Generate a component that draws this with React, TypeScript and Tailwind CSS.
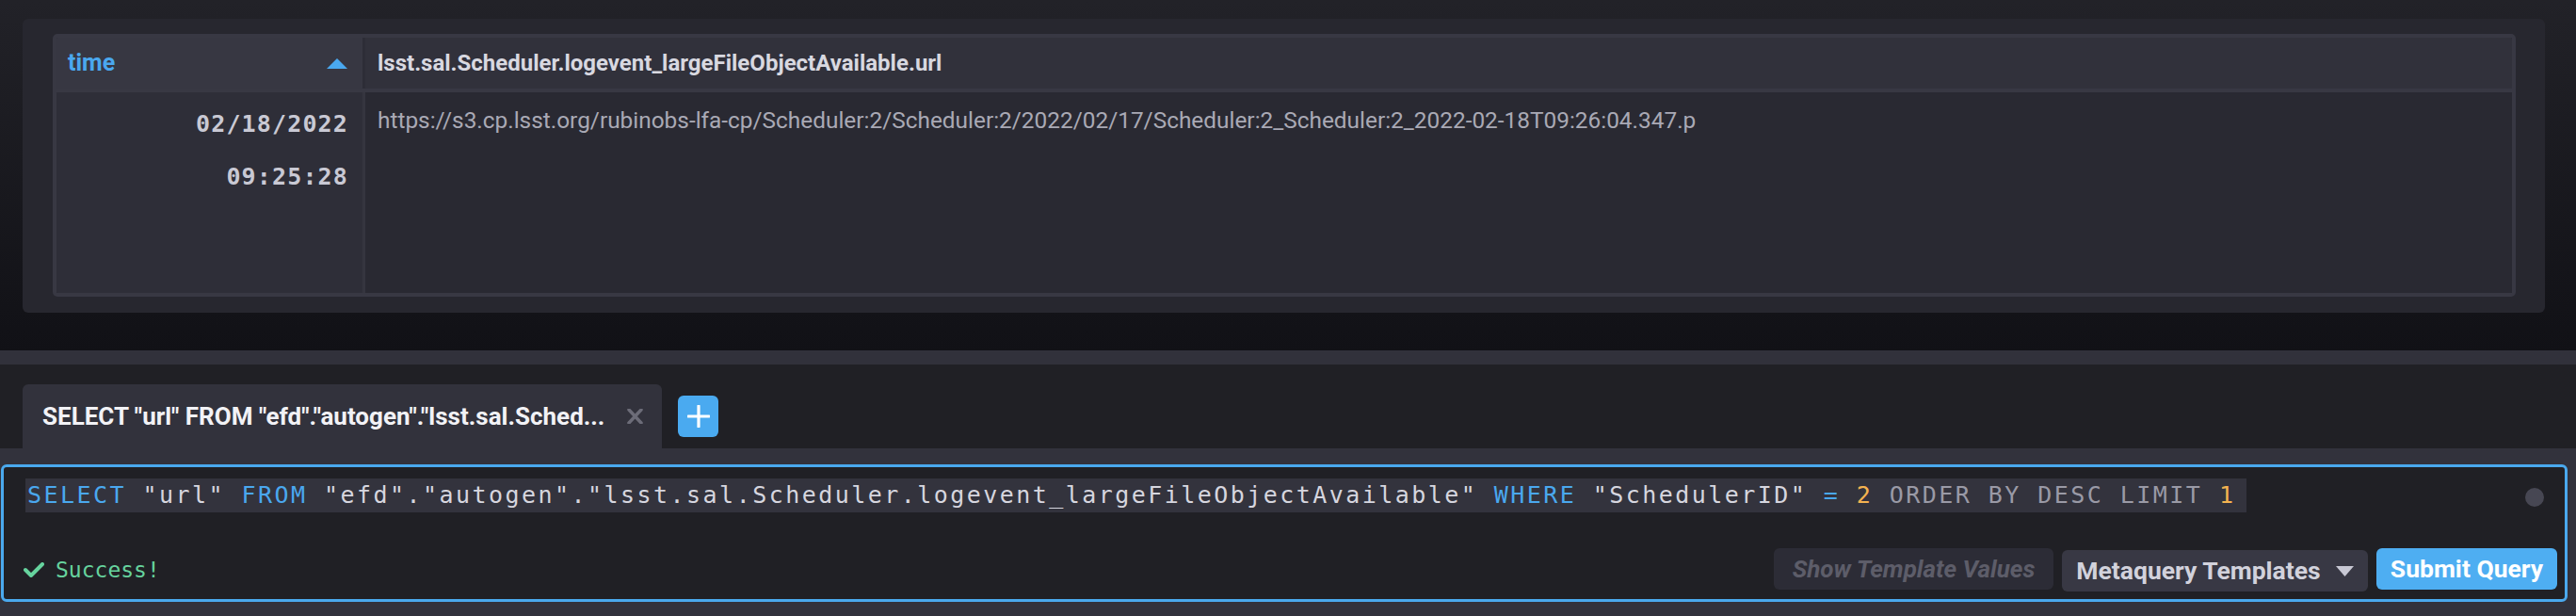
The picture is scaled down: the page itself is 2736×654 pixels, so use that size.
import { ReactNode } from "react";

const mono = "font-['DejaVu_Sans_Mono',monospace]";

function Kw({ children }: { children: ReactNode }) {
  return <span className="text-[#4aa8ef]">{children}</span>;
}

function Str({ children }: { children: ReactNode }) {
  return <span className="text-[#d6d6df]">{children}</span>;
}

function Num({ children }: { children: ReactNode }) {
  return <span className="text-[#f4b350]">{children}</span>;
}

function ResultsTable() {
  return (
    <div className="h-full rounded-[5px] border-4 border-[#383843] flex flex-col overflow-hidden">
      {/* Header */}
      <div className="h-[58px] flex border-b-4 border-[#383843]">
        <div className="w-[328px] shrink-0 bg-[#373742] border-r-[3px] border-[#2d2d37] flex items-center justify-between pl-3 pr-4">
          <span className="text-[25px] font-bold text-[#4aa8ef]">time</span>
          <svg width="22" height="11" viewBox="0 0 22 11">
            <polygon points="11,0 22,11 0,11" fill="#4aa8ef" />
          </svg>
        </div>
        <div className="flex-1 bg-[#31313b] flex items-center pl-[13px]">
          <span className="text-[24px] font-bold text-[#d8d8e0]">
            lsst.sal.Scheduler.logevent_largeFileObjectAvailable.url
          </span>
        </div>
      </div>
      {/* Body */}
      <div className="flex-1 flex">
        <div className="w-[328px] shrink-0 bg-[#2e2e38] border-r-[3px] border-[#35353f] pt-[6px] pr-[15px] text-right">
          <div className={`${mono} text-[25px] font-bold tracking-[1.15px] leading-[56px] text-[#c9c9d4]`}>
            02/18/2022
            <br />
            09:25:28
          </div>
        </div>
        <div className="flex-1 bg-[#292932] pl-[13px] pt-[2px]">
          <div className="text-[24.4px] leading-[56px] text-[#a9a9b5] whitespace-nowrap">
            https://s3.cp.lsst.org/rubinobs-lfa-cp/Scheduler:2/Scheduler:2/2022/02/17/Scheduler:2_Scheduler:2_2022-02-18T09:26:04.347.p
          </div>
        </div>
      </div>
    </div>
  );
}

function QueryEditor() {
  return (
    <div className="relative h-full flex flex-col rounded-md border-[3px] border-[#4aa9ee] bg-[#202025]">
      <div className="pt-3 pl-[23px]">
        <span
          className={`${mono} inline-block bg-[#33333d] pl-[2px] pr-3 text-[25px] tracking-[2.45px] leading-[36px] whitespace-pre`}
        >
          <Kw>SELECT</Kw> <Str>"url"</Str> <Kw>FROM</Kw>{" "}
          <Str>"efd"."autogen"."lsst.sal.Scheduler.logevent_largeFileObjectAvailable"</Str>{" "}
          <Kw>WHERE</Kw> <Str>"SchedulerID"</Str> <Kw>=</Kw> <Num>2</Num>{" "}
          <span className="text-[#9a9aa6]">ORDER BY DESC LIMIT</span> <Num>1</Num>
        </span>
      </div>
      <div className="absolute right-[22px] top-[22px] w-5 h-5 rounded-full bg-[#474753]" />

      <div className="mt-auto flex items-center justify-between pl-[21px] pr-2 pb-2">
        <div className="flex items-center gap-3 text-[#66d39e]">
          <svg width="22" height="16" viewBox="0 0 22 16" fill="none">
            <polyline points="2,8 8,14 20,2" stroke="#66d39e" strokeWidth="4" strokeLinecap="round" strokeLinejoin="round" />
          </svg>
          <span className={`${mono} text-[23px]`}>Success!</span>
        </div>
        <div className="flex items-start gap-[9px]">
          <button className="w-[297px] h-11 rounded-md bg-[#2c2c36] text-[26px] font-bold italic text-[#5d5d69] whitespace-nowrap">
            Show Template Values
          </button>
          <button className="mt-[2px] w-[325px] h-11 rounded-md bg-[#383844] flex items-center justify-center gap-4 text-[26.5px] font-bold text-[#d2d2dc] whitespace-nowrap">
            Metaquery Templates
            <svg width="19" height="11" viewBox="0 0 19 11">
              <polygon points="0,0 19,0 9.5,11" fill="#c8c8d4" />
            </svg>
          </button>
          <button className="w-[192px] h-11 rounded-md bg-[#4eaef2] text-[26.5px] font-bold text-white whitespace-nowrap">
            Submit Query
          </button>
        </div>
      </div>
    </div>
  );
}

export default function App() {
  return (
    <div className="w-[2736px] h-[654px] flex flex-col overflow-hidden font-['Roboto',sans-serif]">
      {/* Results area */}
      <section className="h-[372px] shrink-0 bg-gradient-to-b from-[#222228] to-[#111116] pt-5 pl-6 pr-[33px]">
        <div className="h-[312px] rounded-md bg-[#27272f] pt-4 pb-[17px] pl-8 pr-[31px]">
          <ResultsTable />
        </div>
      </section>

      {/* Drag divider */}
      <div className="h-[15px] shrink-0 bg-[#31313b]" />

      {/* Query tabs */}
      <div className="h-[89px] shrink-0 bg-[#202025] flex items-end pl-6">
        <div className="w-[679px] h-[68px] rounded-t-md bg-[#32323c] flex items-center justify-between pl-[21px] pr-5">
          <span className="text-[26px] font-bold text-[#f2f2f6] whitespace-nowrap">
            SELECT "url" FROM "efd"."autogen"."lsst.sal.Sched...
          </span>
          <svg width="17" height="16" viewBox="0 0 17 16">
            <path d="M2 1 L15 15 M15 1 L2 15" stroke="#6c6c78" strokeWidth="3.5" strokeLinecap="round" />
          </svg>
        </div>
        <button className="ml-[17px] mb-3 w-[43px] h-11 rounded-md bg-[#4aaaf0] flex items-center justify-center">
          <svg width="24" height="24" viewBox="0 0 24 24">
            <path d="M12 1 V23 M1 12 H23" stroke="white" strokeWidth="3.2" strokeLinecap="round" />
          </svg>
        </button>
      </div>

      {/* Editor */}
      <div className="flex-1 bg-[#32323c] pt-[17px] pb-[15px] pl-px pr-[9px]">
        <QueryEditor />
      </div>
    </div>
  );
}
